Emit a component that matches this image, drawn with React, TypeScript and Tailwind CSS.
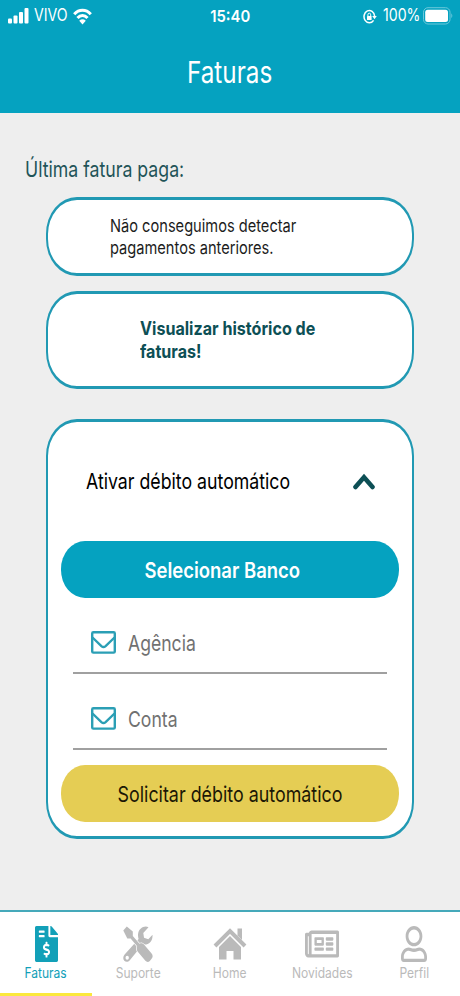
import React from "react";
import { FaFileInvoiceDollar, FaRegNewspaper, FaRegUser } from "react-icons/fa";

const SignalIcon = () => (
  <svg className="w-[21px] h-4" viewBox="0 0 21 16" fill="currentColor">
    <rect x="0" y="10.5" width="4" height="5" rx="1" />
    <rect x="5.5" y="7.5" width="4" height="8" rx="1" />
    <rect x="11" y="4" width="4" height="11.5" rx="1" />
    <rect x="16.5" y="0" width="4" height="15.5" rx="1" />
  </svg>
);

const WifiIcon = () => (
  <svg className="w-[19px] h-[17px]" viewBox="0 0 19 17" fill="none" stroke="currentColor" strokeWidth="3">
    <path d="M1.2 6.2C6 1 13 1 17.8 6.2" />
    <path d="M4.5 10C7.5 6.7 11.5 6.7 14.5 10" />
    <path d="M6.2 12.7Q9.5 9.8 12.8 12.7L9.5 16.5Z" fill="currentColor" stroke="none" />
  </svg>
);

const RotationLockIcon = () => (
  <svg className="w-[14px] h-[15px]" viewBox="0 0 14 15" fill="none" stroke="currentColor">
    <path d="M10.6 11.3A5.3 6.2 0 1 1 11.6 7" strokeWidth="1.5" />
    <path d="M9.2 7H13.8L11.5 10.2Z" fill="currentColor" stroke="none" />
    <rect x="4" y="7" width="4.6" height="4" rx="0.5" fill="currentColor" stroke="none" />
    <path d="M4.9 7V5.8A1.4 1.6 0 0 1 7.7 5.8V7" strokeWidth="1" />
  </svg>
);

const BatteryIcon = () => (
  <svg className="w-[30px] h-[18px]" viewBox="0 0 30 18">
    <rect x="0.5" y="0.7" width="26.5" height="16.3" rx="4.5" fill="none" stroke="#6cc8db" />
    <rect x="2.2" y="2.7" width="22.8" height="12.3" rx="2.5" fill="#fff" />
    <path d="M28.3 6.3Q30.3 8.8 28.3 11.3Z" fill="#6cc8db" />
  </svg>
);

const EnvelopeIcon = () => (
  <svg className="w-[25px] h-[23px] text-[#2b9fb5]" viewBox="0 0 25 23" fill="none" stroke="currentColor" strokeWidth="2.4">
    <rect x="1.2" y="1.2" width="22.6" height="20.4" rx="1.2" />
    <path d="M1.5 6.5L10.4 15.2Q12.5 17 14.6 15.2L23.5 6.5" />
  </svg>
);

type IconProps = React.SVGProps<SVGSVGElement>;

const HomeIcon = (props: IconProps) => (
  <svg viewBox="0 0 34 36" fill="currentColor" {...props}>
    <path d="M24.5 2.500H29V14L24.500 9.500Z" />
    <path d="M2 20L17 5L32 20" fill="none" stroke="currentColor" strokeWidth="4" />
    <path d="M6 21L17 10L28 21V33.500H20.500V25H13.500V33.500H6Z" />
  </svg>
);

const ToolsIcon = (props: IconProps) => (
  <svg viewBox="0 0 30 36" {...props}>
    {/* wrench */}
    <path
      fill="currentColor"
      fillRule="evenodd"
      d="M25.500 1.200C21 -0.800 15.500 2.500 15 8.500C14.900 10.200 15.200 11.500 15.600 13L1.600 28.500C-0.200 30.700 -0.100 33.200 1.300 34.700C2.800 36.300 5 36.200 6.800 34.300L19.800 18.200C25 19.500 30 15.500 29.500 8.700L25.300 13.300L21 11.800L20.300 7ZM4.200 29.700A1.700 2 0 1 0 4.200 33.700A1.700 2 0 1 0 4.200 29.700Z"
    />
    {/* screwdriver, with a gap where it crosses the wrench */}
    <path
      fill="currentColor"
      stroke="#fff"
      strokeWidth="1.200"
      paintOrder="stroke"
      d="M0.300 4.500L3.800 0.500L9.800 5.500V10L16.500 17.700C18 16.800 19.800 17.200 21 18.600L28.600 27.600C30 29.300 30 31.200 28.600 32.800L26.800 34.900C25.500 36.300 23.700 36.300 22.400 34.800L14.800 25.800C13.600 24.300 13.400 22 14.200 20.300L7.600 12.600H4.300Z"
    />
  </svg>
);

const Field: React.FC<{ label: string }> = ({ label }) => (
  <div className="mx-3 flex h-[76px] items-end border-b-2 border-[#a0a0a0] pl-[18px] pb-[18px]">
    <EnvelopeIcon />
    <span className="ml-3 h-6 origin-left scale-x-[0.8] text-[22px] leading-[26px] text-[#717171]">{label}</span>
  </div>
);

const tabs = [
  { label: "Faturas", icon: FaFileInvoiceDollar, size: "w-[23px] h-9", active: true },
  { label: "Suporte", icon: ToolsIcon, size: "w-[30px] h-9" },
  { label: "Home", icon: HomeIcon, size: "w-[34px] h-9" },
  { label: "Novidades", icon: FaRegNewspaper, size: "w-[34px] h-9" },
  { label: "Perfil", icon: FaRegUser, size: "w-[26px] h-9" },
];

const App: React.FC = () => {
  return (
    <div className="flex h-[996px] w-[460px] flex-col overflow-hidden bg-[#eeeeee] font-['Inter','Liberation_Sans',sans-serif] whitespace-nowrap">
      <header className="h-[113px] shrink-0 bg-[#05a2c0] text-white">
        <div className="grid h-8 grid-cols-3 items-center pl-2 pr-[7px]">
          <div className="flex items-center">
            <SignalIcon />
            <span className="ml-[5px] w-[35px] origin-left scale-x-[0.83] text-[17px]">VIVO</span>
            <span className="ml-1"><WifiIcon /></span>
          </div>
          <span className="origin-center scale-x-[0.9] text-center text-[16.5px] font-semibold">15:40</span>
          <div className="flex items-center justify-end">
            <RotationLockIcon />
            <span className="ml-[6px] w-[40px] origin-left scale-x-[0.83] text-[17px]">100%</span>
            <BatteryIcon />
          </div>
        </div>
        <h1 className="mt-[18px] origin-center scale-x-[0.81] pr-px text-center text-[30px] leading-[44px]">Faturas</h1>
      </header>

      <main className="flex-1">
        <h2 className="mt-[41px] ml-[25px] origin-left scale-x-[0.805] text-[22px] leading-[30px] text-[#1f5458]">
          Última fatura paga:
        </h2>
        <div className="mx-[46px] mt-[13px] h-[79px] rounded-[31px/37px] border-x-2 border-y-3 border-[#2199b3] bg-white pl-[62px] pt-[15px]">
          <p className="origin-left scale-x-[0.836] text-[17.5px] leading-[21.5px] text-[#1c1c1c]">
            Não conseguimos detectar
            <br />
            pagamentos anteriores.
          </p>
        </div>
        <button className="mx-[46px] mt-[15px] block h-[98px] w-[368px] rounded-[31px/37px] border-x-2 border-y-3 border-[#2199b3] bg-white pl-[91.5px] text-left">
          <span className="block origin-left scale-x-[0.87] text-[18.5px] leading-[23.5px] font-bold text-[#0d4f55]">
            Visualizar histórico de
            <br />
            faturas!
          </span>
        </button>

        <section className="mx-[46px] mt-[30px] h-[420px] rounded-[31px/37px] border-x-2 border-y-3 border-[#2199b3] bg-white px-[13px]">
          <div className="flex h-[119px] items-center justify-between pl-[25px] pr-6">
            <span className="w-[210px] origin-left scale-x-[0.806] text-[22px]">Ativar débito automático</span>
            <svg className="h-[17px] w-[22px]" viewBox="0 0 22 17" fill="none" stroke="#0d4f55" strokeWidth="4.6" strokeLinecap="round" strokeLinejoin="miter">
              <path d="M2.5 14L11 4.2L19.500 14" />
            </svg>
          </div>
          <button className="block h-[57px] w-full rounded-[24px/28px] bg-[#05a2c0] text-white">
            <span className="block origin-center scale-x-[0.86] pr-[18px] pt-px text-[21.5px] font-semibold">Selecionar Banco</span>
          </button>
          <Field label="Agência" />
          <Field label="Conta" />
          <button className="mt-[15px] block h-[57px] w-full rounded-[24px/28px] bg-[#e5cd54] text-[#1b1705]">
            <span className="block origin-center scale-x-[0.812] pt-px text-[22px]">Solicitar débito automático</span>
          </button>
        </section>
      </main>

      <nav className="grid h-[86px] shrink-0 grid-cols-5 border-t-2 border-[#45a9ba] bg-white">
        {tabs.map(({ label, icon: Icon, size, active }) => (
          <a
            key={label}
            className={`flex flex-col items-center border-b-3 pt-[14px] ${
              active ? "border-[#fbe83c] text-[#12a0b8]" : "border-transparent text-[#bababa]"
            }`}
          >
            <Icon className={size} preserveAspectRatio="none" />
            <span className="origin-center scale-x-[0.86] pt-px text-[14px] leading-5">{label}</span>
          </a>
        ))}
      </nav>
    </div>
  );
};

export default App;
